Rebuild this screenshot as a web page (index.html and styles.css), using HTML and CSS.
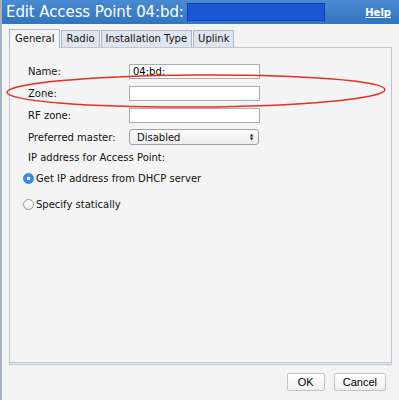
FILE: index.html
```html
<!DOCTYPE html>
<html lang="en">
<head>
    <meta charset="UTF-8">
    <title>Edit Access Point</title>
    <link rel="stylesheet" href="styles.css">
</head>
<body>
    <div class="dialog">
        <div class="titlebar">
            <span class="title">Edit Access Point 04:bd:</span>
            <span class="redact"></span>
            <a class="help" href="#">Help</a>
        </div>
        <div class="tabs">
            <div class="tab active">General</div>
            <div class="tab">Radio</div>
            <div class="tab">Installation Type</div>
            <div class="tab">Uplink</div>
        </div>
        <div class="panel">
            <div class="row"><label>Name:</label><input type="text" value="04:bd:"></div>
            <div class="row"><label>Zone:</label><input type="text"></div>
            <div class="row"><label>RF zone:</label><input type="text"></div>
            <div class="row"><label>Preferred master:</label>
                <div class="select"><span>Disabled</span><span class="arrows">&#9650;<br>&#9660;</span></div>
            </div>
            <div class="section">IP address for Access Point:</div>
            <div class="radio-row first"><span class="radio checked"></span>Get IP address from DHCP server</div>
            <div class="radio-row"><span class="radio"></span>Specify statically</div>
        </div>
        <div class="buttons">
            <button>OK</button>
            <button>Cancel</button>
        </div>
        <svg class="mark" width="399" height="60" viewBox="0 0 399 60">
            <ellipse cx="194" cy="31" rx="189" ry="16" fill="none" stroke="#e8301c" stroke-width="1.5" transform="rotate(-0.4 194 31)"/>
        </svg>
    </div>
</body>
</html>
```

FILE: styles.css
```css
body {
    margin: 0;
    font-family: "DejaVu Sans", Verdana, sans-serif;
    background: #f3f3f3;
}
.dialog {
    position: relative;
    width: 399px;
    height: 400px;
    background: #f3f3f3;
    border-left: 2px solid #a7b3c4;
    box-sizing: border-box;
}
.titlebar {
    height: 24px;
    background: linear-gradient(#4a8ad0, #3174c2);
    display: flex;
    align-items: center;
    padding-left: 4px;
    color: white;
}
.title {
    font-size: 15px;
    letter-spacing: -0.1px;
}
.redact {
    width: 136px;
    height: 16px;
    margin-left: 3px;
    background: #1b56d4;
    border: 1px solid #0d3fa8;
}
.help {
    margin-left: auto;
    margin-right: 8px;
    color: white;
    font-size: 10px;
    font-weight: bold;
}
.tabs {
    display: flex;
    margin: 6px 0 0 7px;
    height: 17px;
}
.tab {
    font-size: 10px;
    padding: 2px 4px 0;
    border: 1px solid #a9b8c8;
    border-bottom: none;
    background: #dfe5ec;
    color: #111;
    margin-right: 1px;
}
.tab.active {
    background: #f4f4f4;
    padding: 3px 5px 0;
    margin-top: -1px;
    position: relative;
    z-index: 1;
    box-sizing: border-box;
    height: 19px;
}
.panel {
    margin: 0 7px 0 7px;
    height: 318px;
    border: 1px solid #b9c7d6;
    border-bottom: 3px double #b3c0d0;
    background: #f4f4f4;
    box-sizing: border-box;
    padding: 12px 0 0 18px;
    font-size: 10px;
    color: #111;
}
.row {
    display: flex;
    align-items: center;
    height: 22px;
}
.row label {
    width: 101px;
}
.row input {
    width: 131px;
    height: 15px;
    box-sizing: border-box;
    border: 1px solid #a8adb3;
    background: white;
    font-family: inherit;
    font-size: 10px;
    padding: 0 3px;
    margin: 0;
}
.select {
    width: 130px;
    height: 16px;
    box-sizing: border-box;
    border: 1px solid #9da3aa;
    border-radius: 3px;
    background: linear-gradient(#fdfdfd, #ececec);
    display: flex;
    align-items: center;
    justify-content: space-between;
    padding: 0 5px 0 7px;
}
.arrows {
    font-size: 4px;
    line-height: 4px;
    text-align: center;
}
.section {
    margin-top: 4px;
}
.radio-row {
    display: flex;
    align-items: center;
    margin-left: -5px;
    height: 14px;
}
.radio-row.first {
    margin-top: 8px;
    margin-bottom: 12px;
}
.radio {
    width: 11px;
    height: 11px;
    border-radius: 50%;
    border: 1px solid #9a9a9a;
    background: linear-gradient(#fff, #e8e8e8);
    box-sizing: border-box;
    margin-right: 2px;
}
.radio.checked {
    border-color: #2e7be8;
    background: radial-gradient(circle, white 0 1.5px, #3b8af2 2px);
}
.buttons {
    display: flex;
    justify-content: flex-end;
    gap: 9px;
    margin: 8px 13px 0 0;
}
.buttons button {
    font-family: "Liberation Sans", Arial, sans-serif;
    font-size: 11px;
    height: 18px;
    padding: 0 8px;
    border: 1px solid #c3c3c3;
    border-radius: 2px;
    background: linear-gradient(#ffffff, #f0f0f0);
    min-width: 38px;
}
.mark {
    position: absolute;
    left: 0;
    top: 60px;
    pointer-events: none;
}
```
